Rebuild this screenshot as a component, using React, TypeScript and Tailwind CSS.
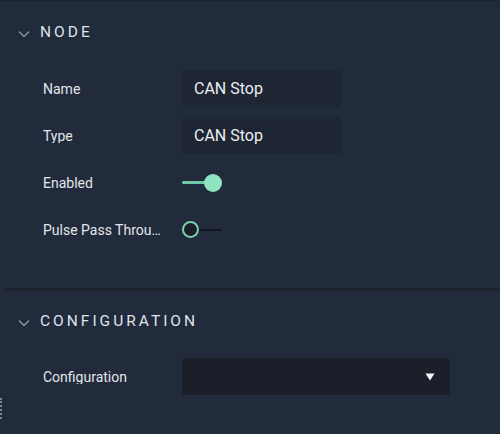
import React from "react";

function Chevron() {
  return (
    <svg width="12" height="8" viewBox="0 0 12 8" className="shrink-0 mt-[2px]">
      <path d="M1 1.5 L6 6.5 L11 1.5" fill="none" stroke="#8a93a1" strokeWidth="1.5" />
    </svg>
  );
}

function Header({ title, h }: { title: string; h: string }) {
  return (
    <div className={`flex items-center pl-[18px] pt-[3px] ${h}`}>
      <Chevron />
      <span className="ml-[10px] text-[15.5px] tracking-[3px] text-[#dde3ea] leading-none">{title}</span>
    </div>
  );
}

function Row({ label, children }: { label: string; children: React.ReactNode }) {
  return (
    <div className="flex items-center h-[37px]">
      <div className="w-[139px] pr-[18px] text-[14px] text-[#e1e6ec] leading-none truncate">{label}</div>
      {children}
    </div>
  );
}

export default function App() {
  return (
    <div
      className="relative w-[500px] h-[434px] overflow-hidden bg-[#222b3b] border-t border-[#1c2330]"
      style={{ fontFamily: "Roboto, 'Noto Sans', sans-serif" }}
    >
      <Header title="NODE" h="h-[60px]" />
      <div className="flex flex-col gap-[10px] pt-[9px] pl-[43px] pb-[40px]">
        <Row label="Name">
          <div className="w-[159px] h-[37px] bg-[#1e2533] flex items-center pl-[12px] text-[16px] text-[#e9eef3]">CAN Stop</div>
        </Row>
        <Row label="Type">
          <div className="w-[159px] h-[37px] bg-[#1e2533] flex items-center pl-[12px] text-[16px] text-[#e9eef3]">CAN Stop</div>
        </Row>
        <Row label="Enabled">
          <div className="relative w-[40px] h-[18px] flex items-center">
            <div className="w-[28px] h-[3px] bg-[#6fcba6] rounded-full" />
            <div className="absolute left-[22px] top-[0px] w-[18px] h-[18px] rounded-full bg-[#8fe4c1]" />
          </div>
        </Row>
        <Row label="Pulse Pass Through">
          <div className="relative w-[40px] h-[18px] flex items-center">
            <div className="absolute left-[14px] w-[26px] h-[2px] bg-[#141921]" />
            <div className="absolute left-0 top-[0.5px] w-[17px] h-[17px] rounded-full bg-[#1a1f28] border-[2.5px] border-[#79d1ad]" />
          </div>
        </Row>
      </div>
      <div className="ml-[3px] h-[3px] bg-[#1b222d]" />
      <Header title="CONFIGURATION" h="h-[58px]" />
      <div className="flex flex-col pt-[9px] pl-[43px]">
        <Row label="Configuration">
          <div className="w-[268px] h-[37px] bg-[#1a1f29] rounded-[3px] flex items-center justify-end pr-[15px]">
            <svg width="10" height="8" viewBox="0 0 10 8">
              <path d="M0.5 0.5 L9.5 0.5 L5 7.5 Z" fill="#f2f4f7" />
            </svg>
          </div>
        </Row>
      </div>
      <div className="absolute left-0 top-[397px] w-[2px] h-[21px] border-l-2 border-dotted border-[#7d8590]" />
    </div>
  );
}
